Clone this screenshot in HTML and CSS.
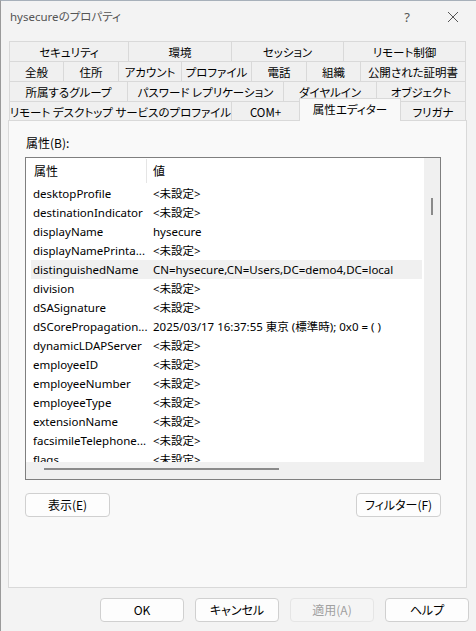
FILE: index.html
```html
<!DOCTYPE html>
<html lang="ja">
<head>
<meta charset="utf-8">
<link rel="stylesheet" href="styles.css">
</head>
<body>
<div class="window">
  <div class="titlebar">
    <div class="title">hysecureのプロパティ</div>
    <div class="tb-btns">
      <span class="tb-help">?</span>
      <span class="tb-close"><svg width="12" height="12" viewBox="0 0 12 12"><path d="M1 1 L11 11 M11 1 L1 11" stroke="#555" stroke-width="1" fill="none"/></svg></span>
    </div>
  </div>

  <div class="tabs">
    <div class="tabrow r1">
      <div class="tab">セキュリティ</div>
      <div class="tab">環境</div>
      <div class="tab">セッション</div>
      <div class="tab">リモート制御</div>
    </div>
    <div class="tabrow r2">
      <div class="tab">全般</div>
      <div class="tab">住所</div>
      <div class="tab">アカウント</div>
      <div class="tab">プロファイル</div>
      <div class="tab">電話</div>
      <div class="tab">組織</div>
      <div class="tab">公開された証明書</div>
    </div>
    <div class="tabrow r3">
      <div class="tab">所属するグループ</div>
      <div class="tab">パスワード レプリケーション</div>
      <div class="tab">ダイヤルイン</div>
      <div class="tab">オブジェクト</div>
    </div>
    <div class="tabrow r4">
      <div class="tab">リモート デスクトップ サービスのプロファイル</div>
      <div class="tab">COM+</div>
      <div class="tab active">属性エディター</div>
      <div class="tab">フリガナ</div>
    </div>
  </div>

  <div class="panel">
    <div class="label">属性(B):</div>
    <div class="listbox">
      <div class="list-main">
        <div class="list-content">
          <div class="header">
            <div class="hcell h1">属性</div>
            <div class="hsep"></div>
            <div class="hcell h2">値</div>
          </div>
          <div class="rows">
            <div class="row"><span class="name">desktopProfile</span><span class="val">&lt;未設定&gt;</span></div>
            <div class="row"><span class="name">destinationIndicator</span><span class="val">&lt;未設定&gt;</span></div>
            <div class="row"><span class="name">displayName</span><span class="val">hysecure</span></div>
            <div class="row"><span class="name">displayNamePrinta...</span><span class="val">&lt;未設定&gt;</span></div>
            <div class="row sel"><span class="name">distinguishedName</span><span class="val">CN=hysecure,CN=Users,DC=demo4,DC=local</span></div>
            <div class="row"><span class="name">division</span><span class="val">&lt;未設定&gt;</span></div>
            <div class="row"><span class="name">dSASignature</span><span class="val">&lt;未設定&gt;</span></div>
            <div class="row"><span class="name">dSCorePropagation...</span><span class="val">2025/03/17 16:37:55 東京 (標準時); 0x0 = ( )</span></div>
            <div class="row"><span class="name">dynamicLDAPServer</span><span class="val">&lt;未設定&gt;</span></div>
            <div class="row"><span class="name">employeeID</span><span class="val">&lt;未設定&gt;</span></div>
            <div class="row"><span class="name">employeeNumber</span><span class="val">&lt;未設定&gt;</span></div>
            <div class="row"><span class="name">employeeType</span><span class="val">&lt;未設定&gt;</span></div>
            <div class="row"><span class="name">extensionName</span><span class="val">&lt;未設定&gt;</span></div>
            <div class="row"><span class="name">facsimileTelephone...</span><span class="val">&lt;未設定&gt;</span></div>
            <div class="row"><span class="name">flags</span><span class="val">&lt;未設定&gt;</span></div>
          </div>
        </div>
        <div class="vscroll"><div class="vthumb"></div></div>
      </div>
      <div class="hscroll"><div class="hthumb"></div></div>
    </div>
    <div class="panel-btns">
      <button class="btn">表示(E)</button>
      <button class="btn">フィルター(F)</button>
    </div>
  </div>

  <div class="footer">
    <button class="btn">OK</button>
    <button class="btn">キャンセル</button>
    <button class="btn disabled">適用(A)</button>
    <button class="btn">ヘルプ</button>
  </div>
</div>
</body>
</html>
```
FILE: styles.css
```css
html, body {
  margin: 0;
  padding: 0;
}
body {
  width: 476px;
  height: 631px;
  overflow: hidden;
  background: #f3f3f3;
  font-family: "Noto Sans", "Noto Sans CJK JP", sans-serif;
  font-size: 11px;
  font-feature-settings: "palt" 1;
  color: #000;
}
.window {
  box-sizing: border-box;
  width: 476px;
  height: 631px;
  border-left: 1px solid #9a9a9a;
  border-top: 1px solid #a7b0ba;
  display: flex;
  flex-direction: column;
  background: #f3f3f3;
}
.titlebar {
  height: 31px;
  display: flex;
  align-items: center;
  justify-content: space-between;
  padding-left: 9px;
}
.title {
  color: #555;
  font-size: 11.5px;
  line-height: 14px;
}
.tb-btns {
  display: flex;
  align-items: center;
}
.tb-help {
  color: #555;
  font-size: 13px;
  width: 46px;
  text-align: center;
}
.tb-close {
  width: 46px;
  display: flex;
  justify-content: center;
}
.tabs {
  margin-top: 9px;
  margin-left: 8px;
  width: 457px;
  display: flex;
  flex-direction: column;
}
.tabrow {
  display: grid;
  height: 20px;
}
.r1 { grid-template-columns: 119px 103px 112px 123px; }
.r2 { grid-template-columns: 54px 55px 63px 70px 55px 54px 106px; }
.r3 { grid-template-columns: 118px 156px 93px 90px; }
.r4 { grid-template-columns: 222px 68px 101px 66px; height: 19px; }
.tab {
  box-sizing: border-box;
  border: 1px solid #d9d9d9;
  border-right: none;
  border-bottom: none;
  background: #f0f0f0;
  display: flex;
  align-items: center;
  justify-content: center;
  font-family: "Noto Sans CJK JP", sans-serif;
  font-size: 11.5px;
  line-height: 14px;
  white-space: nowrap;
}
.tab:last-child {
  border-right: 1px solid #d9d9d9;
}
.tab.active {
  background: #f9f9f9;
  margin-top: -3px;
  height: 23px;
  position: relative;
  z-index: 1;
  border-right: 1px solid #d9d9d9;
  margin-right: -1px;
  padding-bottom: 2px;
}
.panel {
  box-sizing: border-box;
  margin-left: 7px;
  width: 459px;
  height: 468px;
  border: 1px solid #d9d9d9;
  background: #f9f9f9;
  padding: 15px 0 0 16px;
  display: flex;
  flex-direction: column;
}
.label {
  font-family: "Noto Sans CJK JP", sans-serif;
  line-height: 14px;
  height: 14px;
  margin-left: 1px;
  margin-bottom: 7px;
  font-size: 12px;
}
.listbox {
  box-sizing: border-box;
  width: 416px;
  height: 323px;
  border: 1px solid #7f7f7f;
  background: #fff;
  display: flex;
  flex-direction: column;
}
.list-main {
  display: flex;
  height: 304px;
}
.list-content {
  flex: 1;
  overflow: hidden;
}
.header {
  height: 26px;
  display: flex;
  align-items: center;
}
.hcell {
  font-family: "Noto Sans CJK JP", sans-serif;
  font-size: 12px;
  line-height: 14px;
}
.h1 {
  width: 112px;
  padding-left: 8px;
}
.hsep {
  width: 1px;
  height: 24px;
  background: #e5e5e5;
}
.h2 {
  padding-left: 6px;
}
.rows {
  padding-left: 5px;
}
.row {
  height: 19px;
  width: 391px;
  display: flex;
  align-items: center;
  padding-left: 2px;
  box-sizing: border-box;
  white-space: nowrap;
  line-height: 14px;
  font-size: 11.5px;
}
.row.sel {
  background: #f0f0f0;
}
.name {
  width: 120px;
  flex: none;
  overflow: hidden;
}
.val {
  flex: none;
}
.vscroll {
  width: 16px;
  background: #f0f0f0;
  position: relative;
}
.vthumb {
  position: absolute;
  left: 7px;
  top: 40px;
  width: 2px;
  height: 17px;
  background: #8a8a8a;
}
.hscroll {
  flex: 1;
  background: #f0f0f0;
  position: relative;
}
.hthumb {
  position: absolute;
  left: 18px;
  top: 6px;
  width: 235px;
  height: 2px;
  background: #8a8a8a;
}
.panel-btns {
  margin-top: 13px;
  width: 416px;
  display: flex;
  justify-content: space-between;
}
.btn {
  box-sizing: border-box;
  width: 85px;
  height: 24px;
  border: 1px solid #d0d0d0;
  border-radius: 4px;
  background: #fdfdfd;
  font-family: "Noto Sans CJK JP", "Noto Sans", sans-serif;
  font-feature-settings: "palt" 1;
  font-size: 12px;
  color: #000;
  padding: 0;
  line-height: 14px;
}
.btn.disabled {
  background: #f5f5f5;
  border-color: #e5e5e5;
  color: #a0a0a0;
}
.footer {
  margin-top: 10px;
  display: flex;
  justify-content: flex-end;
  gap: 11px;
  padding-right: 7px;
}
.footer .btn {
  width: 84px;
}
```
